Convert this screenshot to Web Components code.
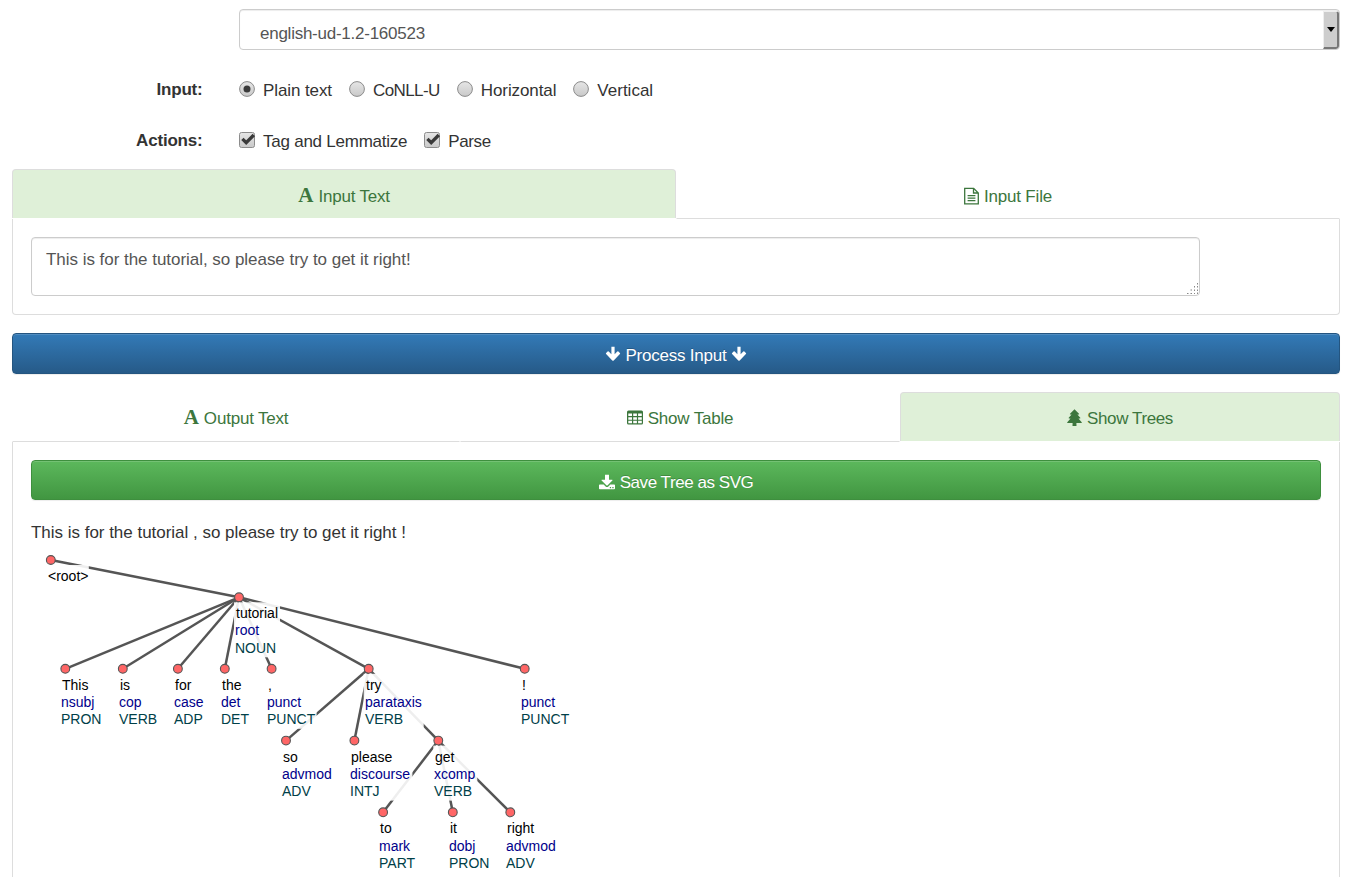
<!DOCTYPE html>
<html lang="en">
<head>
<meta charset="utf-8">
<title>UDPipe</title>
<style>
html,body{margin:0;height:877px;overflow:hidden;background:#fff}
body{font:17px/24px "Liberation Sans",Arial,sans-serif;color:#333}
</style>
</head>
<body>
<ud-app></ud-app>
<script>
const define = (name, html, setup) => customElements.define(name, class extends HTMLElement {
  connectedCallback() {
    if (this.shadowRoot) return;
    const t = document.createElement('template');
    t.innerHTML = html;
    this.attachShadow({mode: 'open'}).append(t.content.cloneNode(true));
    if (setup) setup(this, this.shadowRoot);
  }
});

const ICONS = {
  file: [15, 18, '<path d="M.7 1.4h9l4.6 4.6v10.9H.7zM9.5 1.4V6h4.8" fill="none" stroke="currentColor" stroke-width="1.3"/><path d="M3.6 8.6h7.8M3.6 11.2h7.8M3.6 13.7h7.8" stroke="currentColor" stroke-width="1.2"/>'],
  table: [16, 15, '<path fill-rule="evenodd" fill="currentColor" d="M1.5.5h13Q16 .5 16 2v11q0 1.500-1.500 1.500h-13Q0 14.500 0 13V2Q0 .5 1.500.5zM1.300 3.500v2.600h3.700V3.500zM6.200 3.500v2.600h3.700V3.500zM11.100 3.500v2.600h3.700V3.500zM1.300 7.200v2.500h3.700V7.200zM6.200 7.200v2.500h3.700V7.200zM11.100 7.200v2.500h3.700V7.200zM1.300 10.800v2.500h3.700v-2.500zM6.200 10.800v2.500h3.700v-2.500zM11.100 10.800v2.500h3.700v-2.500z"/>'],
  tree: [15, 18, '<path fill="currentColor" d="M7.500.3L12 4.800q.3.600-.3.700H10.400L13.300 8.700q.3.600-.3.700H11.500L14.700 13.200q.4.900-.5.900H9.400L9.500 17H5.500l.1-2.900H.8q-.9 0-.5-.9L3.500 9.400H2q-.6-.1-.3-.7L4.600 5.500H3.300q-.6-.1-.3-.7z"/>'],
  arrow: [16, 16, '<path fill="currentColor" d="M6.400.8h3.200v7.500l2.700-2.700q.6-.5 1.100 0l1.500 1.400q.5.500 0 1L8.700 14.400q-.7.600-1.400 0L1.100 8q-.5-.5 0-1l1.500-1.400q.5-.5 1.100 0l2.700 2.700z"/>'],
  download: [16, 16, '<path fill-rule="evenodd" fill="currentColor" d="M6 .8h4v4.900h3.200q.6.200.2.700L8.400 11.400q-.4.300-.8 0L2.600 6.400q-.4-.5.200-.7H6zM.8 10.500h3.900l1.900 1.900q1.400 1.100 2.800 0l1.900-1.900h3.900q.8 0 .8.800v3.100q0 .8-.8.800H.8q-.8 0-.8-.8v-3.100q0-.8.800-.8zM10.800 13v1.200h1.300V13zM13.300 13v1.200h1.300V13z"/>']
};

define('ud-icon', `<style>
:host{display:inline-block;vertical-align:-2px;margin-right:5px;line-height:0}
:host([last]){margin:0 0 0 5px}
:host([name=arrow]),:host([name=table]){vertical-align:-1px}
:host([name=file]),:host([name=tree]){vertical-align:-3px}
svg{display:block}
.letter{font:bold 21px/16px "Liberation Serif",serif;width:16px;text-align:center;letter-spacing:0}
:host([name=font]){vertical-align:baseline}
</style><span></span>`, (host, root) => {
  const n = host.getAttribute('name'), s = root.querySelector('span');
  if (n === 'font') { s.className = 'letter'; s.textContent = 'A'; return; }
  const [w, h, body] = ICONS[n];
  s.innerHTML = `<svg width="${w}" height="${h}" viewBox="0 0 ${w} ${h}">${body}</svg>`;
});

define('ud-select', `<style>
:host{display:flex;justify-content:space-between;box-sizing:border-box;height:41px;border:1px solid #ccc;border-radius:4px;box-shadow:inset 0 1px 1px rgba(0,0,0,.075);color:#555;overflow:hidden}
.value{padding:12px 0 0 20px;line-height:24px;letter-spacing:-.25px}
.handle{box-sizing:border-box;width:16px;margin-top:1px;border:solid;border-width:1px 2px 2px 1px;border-color:#eee #777 #777 #eee;background:#cdcdcd;border-radius:0 3px 3px 0;display:flex;align-items:center;justify-content:center}
svg{margin-left:1px}
</style><div class="value"><slot></slot></div><div class="handle"><svg width="8" height="5"><path d="M0 0h8L4 5z"/></svg></div>`);

define('ud-field', `<style>
:host{display:flex}
b{width:190.500px;text-align:right;margin-right:36.500px;padding-top:1px;letter-spacing:-.2px}
.controls{flex:1;display:flex}
</style><b></b><div class="controls"><slot></slot></div>`, (host, root) => {
  root.querySelector('b').textContent = host.getAttribute('label') || '';
});

define('ud-choice', `<style>
:host{display:flex;align-items:flex-start;white-space:nowrap}
svg{margin:4px 8px 0 0;flex:none}
.text{padding-top:2px}
</style><svg width="16" height="16"></svg><span class="text"><slot></slot></span>`, (host, root) => {
  const grad = '<linearGradient id="g" x2="0" y2="1"><stop stop-color="#e6e6e6"/><stop offset="1" stop-color="#c9c9c9"/></linearGradient>';
  root.querySelector('svg').innerHTML = grad + (host.getAttribute('type') === 'radio'
    ? '<circle cx="8" cy="8" r="7.400" fill="url(#g)" stroke="#8c8c8c"/>' + (host.hasAttribute('checked') ? '<circle cx="8" cy="8" r="3.500" fill="#3a3a3a"/>' : '')
    : '<rect x=".5" y=".5" width="15" height="15" rx="2" fill="url(#g)" stroke="#8c8c8c"/><path d="M3.400 6.800L7.200 10.600L14.800 3" fill="none" stroke="#3a3a3a" stroke-width="3.300"/>');
});

define('ud-tab', `<style>
:host{flex:1 1 0;box-sizing:border-box;height:50px;padding-top:var(--tab-pad,15px);text-align:center;color:#3c763d;border:1px solid transparent;border-bottom-color:#ddd;white-space:nowrap;letter-spacing:-.2px}
:host([active]){border-radius:4px 4px 0 0;background:#dff0d8;border-color:#ddd;border-bottom:0;height:49px!important}
</style><slot></slot>`);

define('ud-tabs', `<style>
:host{display:flex;flex-direction:column}
.bar{display:flex;height:50px}
.panel{flex:1;border:1px solid #ddd;border-top:0;padding:18px;border-radius:0 0 4px 4px}
</style><div class="bar"><slot name="tab"></slot></div><div class="panel"><slot></slot></div>`);

define('ud-textarea', `<style>
:host{display:flex;justify-content:space-between;align-items:flex-end;box-sizing:border-box;width:1169px;height:59px;border:1px solid #ccc;border-radius:4px;color:#555;box-shadow:inset 0 1px 1px rgba(0,0,0,.075)}
.text{align-self:flex-start;padding:10px 14px 0;letter-spacing:-.035px}
svg{margin:0 1px 1px 0}
</style><div class="text"><slot></slot></div>
<svg width="11" height="11" fill="#888"><path d="M10 0h1v1.500h-1zM7 3h1v1.500H7zM10 3h1v1.500h-1zM3.500 6.500h1.500v1H3.500zM7 6.500h1v1.500H7zM10 6.500h1v1.500h-1zM0 10h1.500v1H0zM3.500 10H5v1H3.500zM7 10h1v1H7zM10 9.500h1V11h-1z"/></svg>`);

define('ud-button', `<style>
:host{display:block;flex:none;box-sizing:border-box;text-align:center;color:#fff;border:1px solid #245580;border-radius:4px;height:41px;padding-top:10px;line-height:24px;letter-spacing:-.23px;text-shadow:0 -1px 0 rgba(0,0,0,.2);background:linear-gradient(#337ab7,#265a88);box-shadow:inset 0 1px 0 rgba(255,255,255,.15),0 1px 1px rgba(0,0,0,.075)}
:host([kind=success]){border-color:#3e8f3e;background:linear-gradient(#5cb85c,#419641);height:40px;letter-spacing:-.45px}
</style><slot></slot>`);

define('ud-tree', `<style>
:host{display:block}
svg{display:block;overflow:visible}
text{font:14px "Liberation Sans",Arial,sans-serif}
.edge{stroke:#555;stroke-width:2.500}
.back{fill:#fff;fill-opacity:.9}
.node{fill:#f66;stroke:#555;stroke-width:1.100}
.form{fill:#000}.rel{fill:#00008b}.tag{fill:#004048}
</style><svg width="600" height="330" viewBox="31 547 600 330"></svg>`, (host, root) => {
  // x, y, parent, form, relation, tag, background width
  const nodes = [
    [50.8,560,-1,'<root>','','',42],
    [239,597.3,0,'tutorial','root','NOUN',46],
    [65.300,668.800,1,'This','nsubj','PRON',42],
    [122.800,668.800,1,'is','cop','VERB',40],
    [177.900,668.800,1,'for','case','ADP',32],
    [224.800,668.800,1,'the','det','DET',30],
    [271.600,668.800,1,',','punct','PUNCT',50],
    [368.700,668.800,1,'try','parataxis','VERB',60],
    [524.700,668.800,1,'!','punct','PUNCT',50],
    [286,740.600,7,'so','advmod','ADV',53],
    [354.400,740.600,7,'please','discourse','INTJ',63],
    [438.300,740.600,7,'get','xcomp','VERB',44],
    [383.100,812.300,11,'to','mark','PART',38],
    [452.800,812.300,11,'it','dobj','PRON',42],
    [510.300,812.300,11,'right','advmod','ADV',53]
  ];
  const esc = s => s.replace('<', '&lt;');
  let out = '';
  for (const [x, y, p] of nodes) if (p >= 0) out += `<line class="edge" x1="${nodes[p][0]}" y1="${nodes[p][1]}" x2="${x}" y2="${y}"/>`;
  nodes.forEach(([x, y, p, f, r, t, w]) => {
    out += `<rect class="back" x="${p < 0 ? x - 4 : x - 5}" y="${y + 5}" width="${w}" height="${r ? 55 : 19}"/>`;
  });
  for (const [x, y] of nodes) out += `<circle class="node" cx="${x}" cy="${y}" r="4.400"/>`;
  nodes.forEach(([x, y, p, f, r, t]) => {
    const left = Math.ceil(x - 4.6), base = Math.round(y + 21);
    const step = p === 0 ? 18 : 17, mid = y > 800 ? 18 : 17;
    out += `<text class="form" x="${p < 0 ? 48 : left + 1}" y="${base}">${esc(f)}</text>`;
    if (r) out += `<text class="rel" x="${left}" y="${base + mid}">${r}</text><text class="tag" x="${left}" y="${base + mid + step}">${t}</text>`;
  });
  root.querySelector('svg').innerHTML = out;
});

define('ud-app', `<style>
:host{display:flex;flex-direction:column;box-sizing:border-box;height:877px;padding:9px 7px 0 12px;overflow:hidden}
ud-select{flex:1}
.model{margin-bottom:27px}
.radios{margin-bottom:27px;height:24px}
.checks{margin-bottom:17px;height:24px}
ud-choice{margin-right:17px}
.in{height:146px;flex:none;margin-bottom:18px}
.process{margin-bottom:18px}
.out{height:560px;flex:none;--tab-pad:14px}
.sentence{margin:21px 0 2px;letter-spacing:-.02px}
.tight{letter-spacing:-.4px}
</style>
<ud-field class="model"><ud-select>english-ud-1.2-160523</ud-select></ud-field>
<ud-field class="radios" label="Input:">
<ud-choice type="radio" checked style="letter-spacing:-.1px">Plain text</ud-choice><ud-choice type="radio" style="letter-spacing:-.57px">CoNLL-U</ud-choice><ud-choice type="radio" style="letter-spacing:-.1px">Horizontal</ud-choice><ud-choice type="radio">Vertical</ud-choice>
</ud-field>
<ud-field class="checks" label="Actions:"><ud-choice type="checkbox" style="letter-spacing:-.24px">Tag and Lemmatize</ud-choice><ud-choice type="checkbox" class="tight">Parse</ud-choice></ud-field>
<ud-tabs class="in">
<ud-tab slot="tab" active><ud-icon name="font"></ud-icon>Input Text</ud-tab>
<ud-tab slot="tab"><ud-icon name="file"></ud-icon>Input File</ud-tab>
<ud-textarea>This is for the tutorial, so please try to get it right!</ud-textarea>
</ud-tabs>
<ud-button class="process"><ud-icon name="arrow"></ud-icon>Process Input<ud-icon name="arrow" last></ud-icon></ud-button>
<ud-tabs class="out">
<ud-tab slot="tab" style="flex:0 0 448px"><ud-icon name="font"></ud-icon>Output Text</ud-tab>
<ud-tab slot="tab"><ud-icon name="table"></ud-icon>Show Table</ud-tab>
<ud-tab slot="tab" active class="tight"><ud-icon name="tree"></ud-icon>Show Trees</ud-tab>
<ud-button kind="success"><ud-icon name="download"></ud-icon>Save Tree as SVG</ud-button>
<div class="sentence">This is for the tutorial , so please try to get it right !</div>
<ud-tree></ud-tree>
</ud-tabs>`);
</script>
</body>
</html>
